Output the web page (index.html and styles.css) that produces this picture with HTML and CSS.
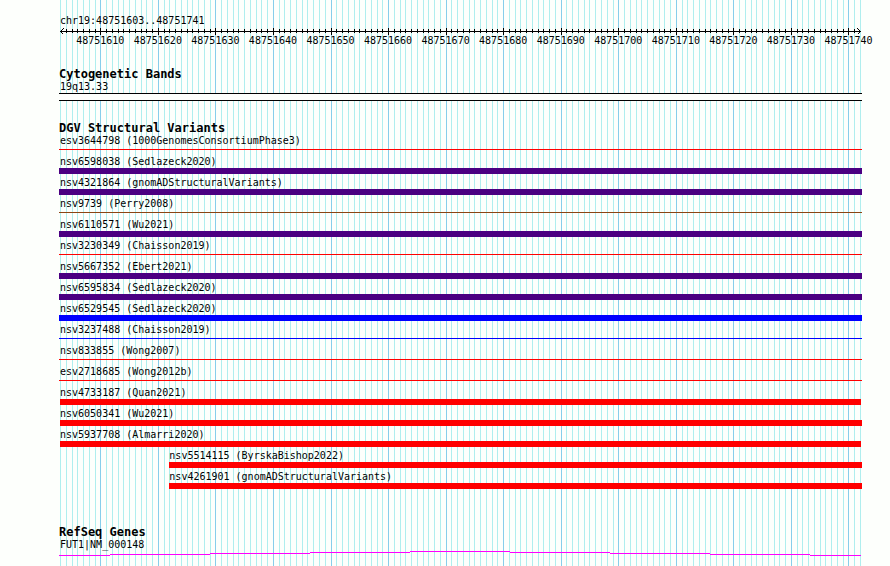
FILE: index.html
```html
<!DOCTYPE html>
<html lang="en">
<head>
<meta charset="utf-8">
<title>chr19:48751603..48751741</title>
<link rel="stylesheet" href="styles.css">
</head>
<body>
<main class="browser">
  <svg class="grid" id="grid" aria-hidden="true"></svg>

  <header class="ruler">
    <h1 class="label">chr19:48751603..48751741</h1>
    <svg class="axis" id="axis" role="img" aria-label="Position scale">
      <rect y="4" width="100%" height="1"/>
      <path class="arrow" d="M3.5 1.5 L0.5 4.5 L3.5 7.5"/>
      <svg class="arrow-end" x="100%"><path class="arrow" d="M-2.5 1.5 L0.5 4.5 L-2.5 7.5"/></svg>
    </svg>
  </header>

  <section class="track track-bands">
    <h2>Cytogenetic Bands</h2>
    <p class="label">19q13.33</p>
    <div class="band"></div>
  </section>

  <section class="track track-variants">
    <h2>DGV Structural Variants</h2>
    <ul class="variants">
      <li class="loss thin"><span class="label">esv3644798 (1000GenomesConsortiumPhase3)</span><i class="bar"></i></li>
      <li class="complex"><span class="label">nsv6598038 (Sedlazeck2020)</span><i class="bar"></i></li>
      <li class="complex"><span class="label">nsv4321864 (gnomADStructuralVariants)</span><i class="bar"></i></li>
      <li class="mixed thin"><span class="label">nsv9739 (Perry2008)</span><i class="bar"></i></li>
      <li class="complex"><span class="label">nsv6110571 (Wu2021)</span><i class="bar"></i></li>
      <li class="loss thin"><span class="label">nsv3230349 (Chaisson2019)</span><i class="bar"></i></li>
      <li class="complex"><span class="label">nsv5667352 (Ebert2021)</span><i class="bar"></i></li>
      <li class="complex"><span class="label">nsv6595834 (Sedlazeck2020)</span><i class="bar"></i></li>
      <li class="gain"><span class="label">nsv6529545 (Sedlazeck2020)</span><i class="bar"></i></li>
      <li class="gain thin"><span class="label">nsv3237488 (Chaisson2019)</span><i class="bar"></i></li>
      <li class="loss thin"><span class="label">nsv833855 (Wong2007)</span><i class="bar"></i></li>
      <li class="loss thin"><span class="label">esv2718685 (Wong2012b)</span><i class="bar"></i></li>
      <li class="loss starts ends"><span class="label">nsv4733187 (Quan2021)</span><i class="bar"></i></li>
      <li class="loss starts"><span class="label">nsv6050341 (Wu2021)</span><i class="bar"></i></li>
      <li class="loss starts ends"><span class="label">nsv5937708 (Almarri2020)</span><i class="bar"></i></li>
      <li class="loss starts" style="--start: 19"><span class="label">nsv5514115 (ByrskaBishop2022)</span><i class="bar"></i></li>
      <li class="loss starts" style="--start: 19"><span class="label">nsv4261901 (gnomADStructuralVariants)</span><i class="bar"></i></li>
    </ul>
  </section>

  <section class="track track-genes">
    <h2>RefSeq Genes</h2>
    <p class="label">FUT1|NM_000148</p>
    <svg class="intron" viewBox="0 0 802 5" preserveAspectRatio="none" aria-hidden="true">
      <path d="M0 4h51v1h-51z M51 3h100v1h-100z M151 2h100v1h-100z M251 1h100v1h-100z M351 0h100v1h-100z M451 1h100v1h-100z M551 2h100v1h-100z M651 3h100v1h-100z M751 4h51v1h-51z"/>
    </svg>
  </section>
</main>
<script src="script.js"></script>
</body>
</html>
```
FILE: styles.css
```css
* {
  box-sizing: border-box;
  margin: 0;
  padding: 0;
}

body {
  background: #fdfffc;
  color: #000;
  font: 10px/12px "DejaVu Sans Mono", "Liberation Mono", monospace;
}

.browser {
  position: relative;
  min-height: 100vh;
  margin: 0 28px 0 59px;
  padding-top: 15px;
}

svg {
  display: block;
  overflow: visible;
  shape-rendering: crispEdges;
}

/* One line per base, behind every track */
.grid {
  position: absolute;
  z-index: -1;
  top: 0;
  left: 1px;
  width: calc(100% - 3px);
  height: 100%;
  fill: #afeeee;
}

.grid .major {
  fill: #87ceeb;
}

.label {
  display: block;
  padding-left: 1px;
  font-size: 10px;
  font-weight: normal;
  line-height: 12px;
  white-space: nowrap;
}

h2 {
  font-size: 12px;
  line-height: 13px;
  white-space: nowrap;
}

.axis {
  width: calc(100% - 3px);
  height: 18px;
  margin-left: 1px;
}

.axis text {
  text-anchor: middle;
}

.arrow {
  fill: none;
  stroke: #000;
}

.track-bands {
  margin-top: 23px;
}

.band {
  height: 8px;
  border: solid #000;
  border-width: 1px 0;
  background: #fdfffc;
}

.track-variants {
  margin-top: 21px;
}

.variants {
  list-style: none;
}

.variants li {
  --start: 0;
  padding-bottom: 3px;
  margin-left: calc(var(--start) / 139 * (100% - 3px));
}

.bar {
  display: block;
  height: 6px;
  background: var(--color);
}

.thin .bar {
  height: 1px;
  margin: 2px 0 3px;
}

.starts .bar {
  margin-left: 1px;
}

.ends .bar {
  margin-right: 1px;
}

.loss {
  --color: #f00;
}

.gain {
  --color: #00f;
}

.complex {
  --color: #4b0082;
}

.mixed {
  --color: #8b4513;
}

.track-genes {
  margin-top: 34px;
}

.intron {
  width: calc(100% - 1px);
  height: 5px;
  fill: #f0f;
}
```
FILE: script.js
```javascript
const START = 48751603;
const BASES = 139;
const NS = "http://www.w3.org/2000/svg";

function add(parent, name, attributes) {
  const node = document.createElementNS(NS, name);
  for (const key in attributes) node.setAttribute(key, attributes[key]);
  parent.appendChild(node);
  return node;
}

const grid = document.getElementById("grid");
const axis = document.getElementById("axis");

for (let i = 0; i <= BASES; i++) {
  const x = (i / BASES) * 100 + "%";
  const major = (START + i) % 10 === 0;
  add(grid, "rect", { x, width: 1, height: "100%", class: major ? "major" : "minor" });
  if (i > 0 && i < BASES) {
    add(axis, "rect", { x, y: major ? 1 : 2, width: 1, height: major ? 7 : 4 });
  }
  if (major) {
    add(axis, "text", { x, y: 17 }).textContent = START + i;
  }
}
```
